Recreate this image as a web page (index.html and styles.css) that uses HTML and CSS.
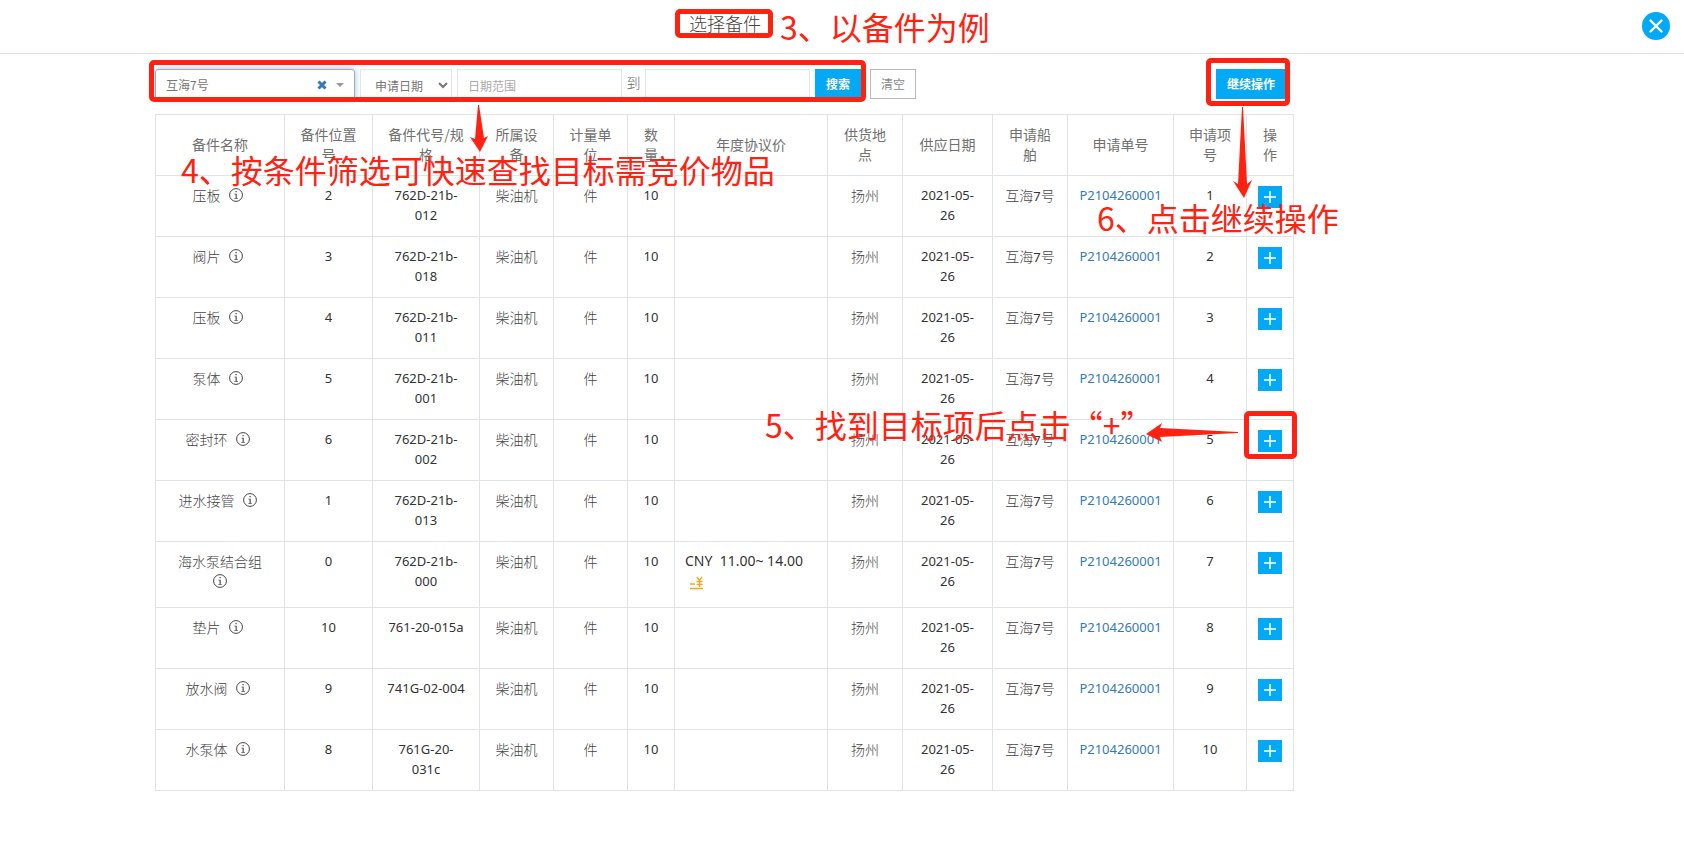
FILE: index.html
```html
<!DOCTYPE html>
<html lang="zh-CN">
<head>
<meta charset="utf-8">
<title>选择备件</title>
<link rel="stylesheet" href="styles.css">
</head>
<body>
<svg class="defs" aria-hidden="true">
  <symbol id="info" viewBox="0 0 14 14"><circle cx="7" cy="7" r="6.4" fill="none" stroke="currentColor"/><path d="M6.5 3h1.2v1.3H6.500zM5.500 5.700h2.200v4.200h1.100v.8H5.400v-.8h1.200V6.500H5.500z" fill="currentColor"/></symbol>
  <symbol id="plus" viewBox="0 0 12 12"><path d="M6 0v12M0 6h12" stroke="currentColor" stroke-width="1.500"/></symbol>
</svg>
<div class="page">
  <header class="top">
    <h1 class="title">选择备件</h1>
    <button class="close" aria-label="关闭"><svg viewBox="0 0 28 28"><path d="M8.500 8.500l11 11M19.500 8.500l-11 11" stroke="currentColor" stroke-width="2.400" stroke-linecap="round"/></svg></button>
  </header>
  <main class="content">
    <form class="filters">
      <button type="button" class="combo"><span>互海7号</span>
        <svg class="combo-x" viewBox="0 0 10 10"><path d="M1.500 1.500l7 7M8.500 1.500l-7 7" stroke="currentColor" stroke-width="3"/></svg>
        <svg class="combo-caret" viewBox="0 0 8 4"><path d="M0 0h8L4 4z" fill="currentColor"/></svg>
      </button>
      <select class="field kind" aria-label="日期类型"><option>申请日期</option></select>
      <input class="field date" type="text" placeholder="日期范围" aria-label="开始日期">
      <span class="to">到</span>
      <input class="field date" type="text" aria-label="结束日期">
      <button type="button" class="btn primary">搜索</button>
      <button type="button" class="btn plain">清空</button>
      <button type="button" class="btn primary next">继续操作</button>
    </form>
    <table class="parts">
      <colgroup><col class="c-name"><col class="c-pos"><col class="c-code"><col class="c-mid"><col class="c-mid"><col class="c-small"><col class="c-price"><col class="c-ship"><col class="c-date"><col class="c-ship"><col class="c-order"><col class="c-item"><col class="c-small"></colgroup>
      <thead><tr><th>备件名称</th><th>备件位置号</th><th>备件代号/规格</th><th>所属设备</th><th>计量单位</th><th>数量</th><th>年度协议价</th><th>供货地点</th><th>供应日期</th><th>申请船舶</th><th>申请单号</th><th>申请项号</th><th>操作</th></tr></thead>
      <tbody>
      <tr><td>压板 <svg class="info"><use href="#info"/></svg></td><td class="n">2</td><td class="n">762D-21b-012</td><td>柴油机</td><td>件</td><td class="n">10</td><td></td><td>扬州</td><td class="n">2021-05-26</td><td>互海<b>7</b>号</td><td class="n order"><a href="#">P2104260001</a></td><td class="n">1</td><td class="act"><button class="add" aria-label="添加"><svg><use href="#plus"/></svg></button></td></tr>
      <tr><td>阀片 <svg class="info"><use href="#info"/></svg></td><td class="n">3</td><td class="n">762D-21b-018</td><td>柴油机</td><td>件</td><td class="n">10</td><td></td><td>扬州</td><td class="n">2021-05-26</td><td>互海<b>7</b>号</td><td class="n order"><a href="#">P2104260001</a></td><td class="n">2</td><td class="act"><button class="add" aria-label="添加"><svg><use href="#plus"/></svg></button></td></tr>
      <tr><td>压板 <svg class="info"><use href="#info"/></svg></td><td class="n">4</td><td class="n">762D-21b-011</td><td>柴油机</td><td>件</td><td class="n">10</td><td></td><td>扬州</td><td class="n">2021-05-26</td><td>互海<b>7</b>号</td><td class="n order"><a href="#">P2104260001</a></td><td class="n">3</td><td class="act"><button class="add" aria-label="添加"><svg><use href="#plus"/></svg></button></td></tr>
      <tr><td>泵体 <svg class="info"><use href="#info"/></svg></td><td class="n">5</td><td class="n">762D-21b-001</td><td>柴油机</td><td>件</td><td class="n">10</td><td></td><td>扬州</td><td class="n">2021-05-26</td><td>互海<b>7</b>号</td><td class="n order"><a href="#">P2104260001</a></td><td class="n">4</td><td class="act"><button class="add" aria-label="添加"><svg><use href="#plus"/></svg></button></td></tr>
      <tr><td>密封环 <svg class="info"><use href="#info"/></svg></td><td class="n">6</td><td class="n">762D-21b-002</td><td>柴油机</td><td>件</td><td class="n">10</td><td></td><td>扬州</td><td class="n">2021-05-26</td><td>互海<b>7</b>号</td><td class="n order"><a href="#">P2104260001</a></td><td class="n">5</td><td class="act"><button class="add" aria-label="添加"><svg><use href="#plus"/></svg></button></td></tr>
      <tr><td>进水接管 <svg class="info"><use href="#info"/></svg></td><td class="n">1</td><td class="n">762D-21b-013</td><td>柴油机</td><td>件</td><td class="n">10</td><td></td><td>扬州</td><td class="n">2021-05-26</td><td>互海<b>7</b>号</td><td class="n order"><a href="#">P2104260001</a></td><td class="n">6</td><td class="act"><button class="add" aria-label="添加"><svg><use href="#plus"/></svg></button></td></tr>
      <tr class="tall"><td>海水泵结合组 <svg class="info"><use href="#info"/></svg></td><td class="n">0</td><td class="n">762D-21b-000</td><td>柴油机</td><td>件</td><td class="n">10</td><td class="n price">CNY&nbsp; 11.00~ 14.00<svg class="yen" viewBox="0 0 14 14"><path d="M0 8h5M0 12.500h13M6.500 5.500h6M6.500 8.500h6M9.500 4.500v6.500M7 1l2.500 3.500L12 1" fill="none" stroke="currentColor" stroke-width="1.300"/></svg></td><td>扬州</td><td class="n">2021-05-26</td><td>互海<b>7</b>号</td><td class="n order"><a href="#">P2104260001</a></td><td class="n">7</td><td class="act"><button class="add" aria-label="添加"><svg><use href="#plus"/></svg></button></td></tr>
      <tr><td>垫片 <svg class="info"><use href="#info"/></svg></td><td class="n">10</td><td class="n">761-20-015a</td><td>柴油机</td><td>件</td><td class="n">10</td><td></td><td>扬州</td><td class="n">2021-05-26</td><td>互海<b>7</b>号</td><td class="n order"><a href="#">P2104260001</a></td><td class="n">8</td><td class="act"><button class="add" aria-label="添加"><svg><use href="#plus"/></svg></button></td></tr>
      <tr><td>放水阀 <svg class="info"><use href="#info"/></svg></td><td class="n">9</td><td class="n">741G-02-004</td><td>柴油机</td><td>件</td><td class="n">10</td><td></td><td>扬州</td><td class="n">2021-05-26</td><td>互海<b>7</b>号</td><td class="n order"><a href="#">P2104260001</a></td><td class="n">9</td><td class="act"><button class="add" aria-label="添加"><svg><use href="#plus"/></svg></button></td></tr>
      <tr><td>水泵体 <svg class="info"><use href="#info"/></svg></td><td class="n">8</td><td class="n">761G-20-031c</td><td>柴油机</td><td>件</td><td class="n">10</td><td></td><td>扬州</td><td class="n">2021-05-26</td><td>互海<b>7</b>号</td><td class="n order"><a href="#">P2104260001</a></td><td class="n">10</td><td class="act"><button class="add" aria-label="添加"><svg><use href="#plus"/></svg></button></td></tr>
      </tbody>
    </table>
  </main>

  <div class="frame frame-title"></div>
  <div class="frame frame-filters"></div>
  <div class="frame frame-next"></div>
  <div class="frame frame-add"></div>
  <svg class="arrows" width="1340" height="480" aria-hidden="true"><path d="M478 105h1l5 33 4-2-8 16-10-15 5 2z"/><path d="M1242 107h1l4 77 5-4-8 18-11-17 5 3z"/><path d="M1238 432v1l-78 4 2 5-16-8 16-11-2 5z"/></svg>
  <p class="note note-3">3、以备件为例</p>
  <p class="note note-4">4、按条件筛选可快速查找目标需竞价物品</p>
  <p class="note note-5">5、找到目标项后点击“+”</p>
  <p class="note note-6">6、点击继续操作</p>
</div>
</body>
</html>
```
FILE: styles.css
```css
* { box-sizing: border-box; }
body {
  margin: 0;
  background: #fff;
  color: #666;
  font: 14px/20px "Noto Sans CJK SC", sans-serif;
}
button, input, select { font: inherit; margin: 0; }
.defs { position: absolute; width: 0; height: 0; }
.page { position: relative; min-height: 100vh; }

.top {
  display: flex;
  height: 54px;
  padding-left: 155px;
  border-bottom: 1px solid #e2e2e2;
}
.title {
  width: 1140px;
  margin: 0;
  padding-top: 11px;
  font-size: 18px;
  line-height: 24px;
  font-weight: 300;
  color: #444;
  text-align: center;
}
.close {
  width: 28px;
  height: 28px;
  margin: 12px 14px 0 auto;
  padding: 0;
  border: 0;
  border-radius: 50%;
  background: #03a9f4;
  color: #fff;
}
.close svg { display: block; }

.content { max-width: 1294px; padding: 15px 0 0 155px; }
.filters {
  display: flex;
  height: 45px;
  align-items: flex-start;
  font-size: 12px;
}
.combo {
  display: flex;
  align-items: center;
  width: 200px;
  height: 31px;
  margin-right: 5px;
  padding: 0 10px;
  border: 1px solid #aaa;
  border-radius: 3px;
  background: #fff;
  box-shadow: 0 0 6px #8fc4ee;
  color: #777;
}
.combo-x { width: 10px; height: 10px; margin-left: auto; color: #337ab7; }
.combo-caret { width: 8px; height: 4px; margin-left: 9px; color: #999; }
.field {
  height: 32px;
  padding: 0 10px;
  border: 1px solid #e3e6e9;
  border-radius: 0;
  background: #fff;
  color: #777;
}
.kind { width: 92px; margin-right: 5px; }
.date { width: 165px; }
.field::placeholder { color: #aaa; opacity: 1; }
.to { width: 23px; padding-top: 3px; font-size: 14px; font-weight: 300; text-align: center; }
.btn {
  height: 30px;
  padding: 0 10px;
  border: 1px solid #03a9f4;
}
.primary { margin-left: 5px; background: #03a9f4; color: #fff; font-weight: 700; }
.plain { margin-left: 9px; border-color: #bbb; background: #fff; color: #888; }
.next { margin: 0 8px 0 auto; }

.parts { width: 100%; border-collapse: collapse; table-layout: fixed; }
.c-name { width: 129px; }
.c-pos { width: 88px; }
.c-code { width: 107px; }
.c-mid { width: 74px; }
.c-small { width: 47px; }
.c-price { width: 153px; }
.c-ship { width: 75px; }
.c-date { width: 90px; }
.c-order { width: 106px; }
.c-item { width: 73px; }
th, td {
  height: 61px;
  padding: 9px 10px 11px;
  border: 1px solid #e0e4e8;
  text-align: center;
  vertical-align: top;
}
td { font-weight: 300; color: #444; }
th { padding: 9px 12px 11px; font-weight: 400; color: #707070; vertical-align: middle; }
.n, td b { font-family: "Noto Sans", sans-serif; font-size: 13px; font-weight: 400; color: #333; }
td.n { padding: 9px 13px 11px; }
.tall td { height: 66px; }
.n a { color: #337ab7; text-decoration: none; }
td.order { padding: 9px 0 11px; }
td.price { padding: 9px 10px 11px; font-size: 14px; text-align: left; white-space: nowrap; }
.info { width: 14px; height: 14px; margin: 0 5px; vertical-align: -1px; color: #444; }
.yen { display: block; width: 14px; height: 14px; margin: 5px 0 0 5px; color: #f5a623; }
td.act { padding: 10px 0; }
.add {
  display: inline-flex;
  align-items: center;
  justify-content: center;
  width: 24px;
  height: 22px;
  padding: 0;
  border: 0;
  background: #03a9f4;
  color: #fff;
  vertical-align: top;
}
.add svg { width: 12px; height: 12px; }

/* Tutorial callouts drawn over the page */
.frame { position: absolute; border: 5px solid #ff2213; border-radius: 5px; pointer-events: none; }
.frame-title { left: 675px; top: 9px; width: 98px; height: 29px; }
.frame-filters { left: 149px; top: 60px; width: 717px; height: 42px; }
.frame-next { left: 1206px; top: 58px; width: 84px; height: 48px; }
.frame-add { left: 1244px; top: 411px; width: 53px; height: 48px; }
.arrows { position: absolute; left: 0; top: 0; fill: #ff2213; pointer-events: none; }
.note {
  position: absolute;
  margin: 0;
  font-size: 32px;
  line-height: 40px;
  color: #ff2213;
  white-space: nowrap;
  font-weight: 400;
  pointer-events: none;
}
.note-3 { left: 780px; top: 6px; }
.note-4 { left: 181px; top: 149px; }
.note-5 { left: 765px; top: 404px; }
.note-6 { left: 1097px; top: 197px; }
```
